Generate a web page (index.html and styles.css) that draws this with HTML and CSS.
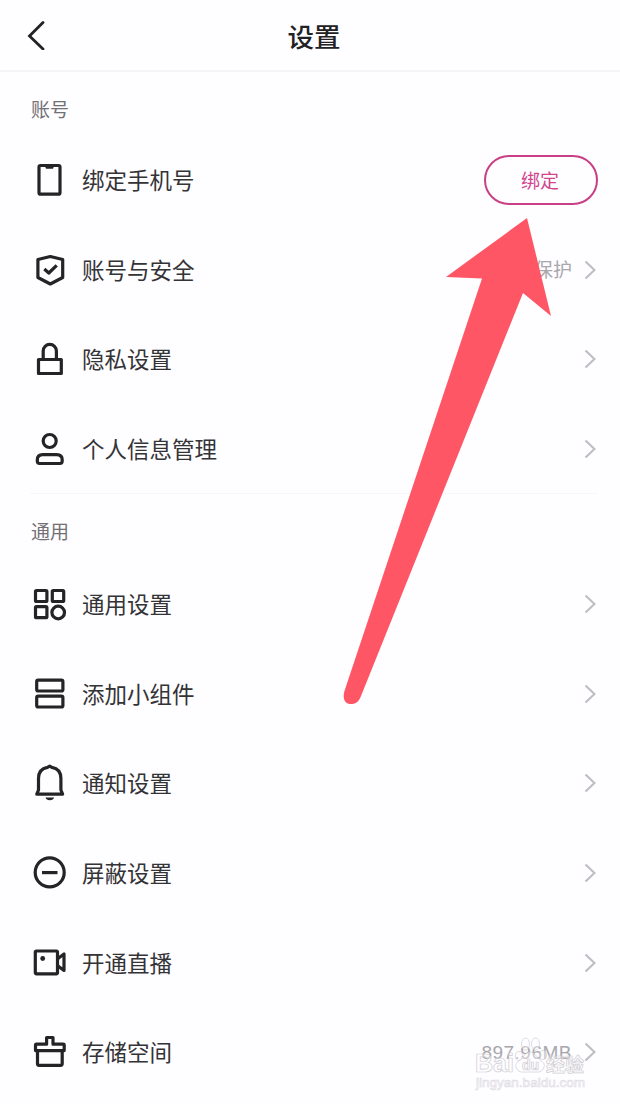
FILE: index.html
```html
<!DOCTYPE html>
<html lang="zh-CN">
<head>
<meta charset="utf-8">
<title>设置</title>
<link rel="stylesheet" href="styles.css">
</head>
<body>
<div class="screen">
  <header class="header">
    <svg class="back" viewBox="0 0 20 30"><path d="M17 2.500 3.500 16 17 29"/></svg>
    <h1 class="title">设置</h1>
  </header>
  <main class="content">
    <section class="group">
      <h2 class="group-title">账号</h2>
      <div class="row">
        <svg class="icon" viewBox="0 0 40 40"><rect x="9" y="5.500" width="21" height="28.700" rx="1.500"/><path class="solid" d="M14.500 5h10l-1.500 3.800h-7z"/></svg>
        <span class="label">绑定手机号</span>
        <button class="bind">绑定</button>
      </div>
      <div class="row">
        <svg class="icon" viewBox="0 0 40 40"><path d="M20.300 6.500 32.700 9.500V27.500L20.300 34 7.900 27.500V9.500Z"/><path d="M14.300 19 18.800 23 26.700 15.300"/></svg>
        <span class="label">账号与安全</span>
        <span class="value">保护</span>
        <svg class="chevron" viewBox="0 0 12 20"><path d="M1.500 1.500 10.500 10 1.500 18.500"/></svg>
      </div>
      <div class="row">
        <svg class="icon" viewBox="0 0 40 40"><rect x="8.500" y="20.500" width="22.800" height="14"/><path d="M13.200 20.500v-8.500a6.600 6.600 0 0 1 13.200 0v8.500"/></svg>
        <span class="label">隐私设置</span>
        <svg class="chevron" viewBox="0 0 12 20"><path d="M1.500 1.500 10.500 10 1.500 18.500"/></svg>
      </div>
      <div class="row">
        <svg class="icon" viewBox="0 0 40 40"><circle cx="19.700" cy="12" r="6.500"/><path d="M7.300 32v-1q0-5.300 5.500-5.300h13.900q5.500 0 5.500 5.300V32q0 2.500-2.300 2.500H9.600Q7.300 34.500 7.300 32Z"/></svg>
        <span class="label">个人信息管理</span>
        <svg class="chevron" viewBox="0 0 12 20"><path d="M1.500 1.500 10.500 10 1.500 18.500"/></svg>
      </div>
    </section>
    <section class="group">
      <h2 class="group-title">通用</h2>
      <div class="row">
        <svg class="icon" viewBox="0 0 40 40"><rect x="5.500" y="6.500" width="11.400" height="11" rx="1"/><rect x="22.300" y="6.500" width="11.400" height="11" rx="1"/><rect x="5.500" y="22.700" width="11.400" height="11" rx="1"/><circle cx="28.200" cy="28.500" r="6.300"/></svg>
        <span class="label">通用设置</span>
        <svg class="chevron" viewBox="0 0 12 20"><path d="M1.500 1.500 10.500 10 1.500 18.500"/></svg>
      </div>
      <div class="row">
        <svg class="icon" viewBox="0 0 40 40"><rect x="6.700" y="6.200" width="26.200" height="10.800" rx="1.500"/><rect x="6.700" y="22.200" width="26.200" height="10.800" rx="1.500"/></svg>
        <span class="label">添加小组件</span>
        <svg class="chevron" viewBox="0 0 12 20"><path d="M1.500 1.500 10.500 10 1.500 18.500"/></svg>
      </div>
      <div class="row">
        <svg class="icon" viewBox="0 0 40 40"><path d="M6.800 31.200 8.500 27V15.500Q8.500 6 17.500 4.400L19.700 3.200l2.200 1.200Q30.900 6 30.900 15.500V27l1.700 4.200Z"/><path class="solid" d="M15.500 34.500h8.600q-.8 2.700-4.300 2.700t-4.300-2.700Z"/></svg>
        <span class="label">通知设置</span>
        <svg class="chevron" viewBox="0 0 12 20"><path d="M1.500 1.500 10.500 10 1.500 18.500"/></svg>
      </div>
      <div class="row">
        <svg class="icon" viewBox="0 0 40 40"><circle cx="19.700" cy="19.400" r="14.500"/><path d="M12 19.600h15.500"/></svg>
        <span class="label">屏蔽设置</span>
        <svg class="chevron" viewBox="0 0 12 20"><path d="M1.500 1.500 10.500 10 1.500 18.500"/></svg>
      </div>
      <div class="row">
        <svg class="icon" viewBox="0 0 40 40"><rect x="5.300" y="8" width="22.200" height="22.800" rx="1.200"/><path d="M28 15.500 34 11V27.500L28 23"/><circle class="solid" cx="12.700" cy="15.500" r="2.400"/></svg>
        <span class="label">开通直播</span>
        <svg class="chevron" viewBox="0 0 12 20"><path d="M1.500 1.500 10.500 10 1.500 18.500"/></svg>
      </div>
      <div class="row">
        <svg class="icon" viewBox="0 0 40 40"><path d="M6.500 12.200H16.600V5.500h6.400v6.700H33.200q1 0 1 1V18.600H5.500V13.200q0-1 1-1Z"/><path d="M7.500 18.600V31.800q0 1.500 1.500 1.500H30.700q1.500 0 1.500-1.500V18.600"/></svg>
        <span class="label">存储空间</span>
        <span class="value size">897.96MB</span>
        <svg class="chevron" viewBox="0 0 12 20"><path d="M1.500 1.500 10.500 10 1.500 18.500"/></svg>
      </div>
    </section>
  </main>
  <svg class="pointer" viewBox="0 0 620 1104"><path d="M527 218 446 277 482 278.500 344.800 690C341 702 348 704.500 352 704 357 703.500 359 701 361 696L523 293 551 316Z"/></svg>
  <svg class="watermark" viewBox="0 0 120 60">
    <g class="mark">
      <text x="5" y="38" font-size="26" textLength="39" lengthAdjust="spacingAndGlyphs">Bai</text>
      <ellipse cx="49" cy="22" rx="3.500" ry="4.500"/><ellipse cx="55.500" cy="10" rx="4" ry="6"/><ellipse cx="65.500" cy="10" rx="4" ry="6"/><ellipse cx="73" cy="21" rx="3.500" ry="4.500"/>
      <path d="M60 18c5 0 6 5 10 8 5 3 5 6 3 9-2 4-6 3-13 3s-11 1-13-3c-2-3-2-6 3-9 4-3 5-8 10-8Z"/>
      <text x="52" y="36" font-size="14">du</text>
      <text x="76" y="38" font-size="19">经验</text>
    </g>
    <text class="url" x="6" y="53" font-size="13" textLength="109" lengthAdjust="spacingAndGlyphs">jingyan.baidu.com</text>
  </svg>
</div>
</body>
</html>
```
FILE: styles.css
```css
* {
  box-sizing: border-box;
}

body {
  margin: 0;
  background: #fefdff;
  font-family: "Noto Sans CJK SC", sans-serif;
  color: #343336;
}

.screen {
  position: relative;
  width: 620px;
  height: 1104px;
  overflow: hidden;
}

.header {
  display: grid;
  grid-template-columns: 1fr auto 1fr;
  align-items: center;
  height: 72px;
  padding: 0 26px 0 26px;
  border-bottom: 2px solid #f4f3f6;
}

.back {
  width: 20px;
  height: 30px;
  fill: none;
  stroke: #222124;
  stroke-width: 2.8;
  stroke-linecap: round;
}

.title {
  margin: 1px 0 0;
  padding-left: 8px;
  font-size: 26.5px;
  line-height: 36px;
  font-weight: 500;
  color: #222124;
}

.content {
  padding: 0 22px 0 30px;
}

.group-title {
  display: flex;
  align-items: center;
  height: 63px;
  margin: 0;
  padding: 10px 0 0 1px;
  font-size: 19px;
  font-weight: 400;
  line-height: 28px;
  color: #727075;
}

.group + .group {
  margin-top: -1px;
  border-top: 1px solid #f7f6f9;
}

.group + .group .group-title {
  height: 65.300px;
}

.row {
  display: flex;
  align-items: center;
  height: 89.700px;
}

.icon {
  flex: none;
  width: 40px;
  height: 40px;
  margin-right: 12px;
  fill: none;
  stroke: #242326;
  stroke-width: 3.2;
  stroke-linejoin: round;
}

.icon .solid {
  fill: #242326;
  stroke: none;
}

.label {
  flex: 1;
  padding-bottom: 2px;
  font-size: 22.500px;
  line-height: 32px;
}

.value {
  margin-right: 12px;
  padding-bottom: 1px;
  font-size: 19px;
  line-height: 28px;
  color: #a9a7ac;
}

.size {
  padding: 1px 0 0;
  font-family: "Liberation Sans", sans-serif;
  letter-spacing: 0.5px;
}

.chevron {
  width: 12px;
  height: 20px;
  margin-right: 2px;
  fill: none;
  stroke: #c0bec3;
  stroke-width: 2.2;
}

.bind {
  width: 114px;
  height: 50px;
  padding: 0 2px 0 0;
  border: 2px solid #c93f86;
  border-radius: 25px;
  background: transparent;
  font: 400 19px/28px "Noto Sans CJK SC", sans-serif;
  color: #d0458e;
}

.pointer {
  position: absolute;
  inset: 0;
  width: 620px;
  height: 1104px;
  fill: #ff5665;
  pointer-events: none;
}

.watermark {
  position: absolute;
  left: 470px;
  top: 1034px;
  width: 120px;
  height: 60px;
  font-family: "Liberation Sans", "Noto Sans CJK SC", sans-serif;
  font-weight: 700;
}

.mark {
  fill: #fefdff;
  fill-opacity: 0.4;
  stroke: #cfcdd1;
  stroke-width: 0.7;
}

.url {
  fill: #fefdff;
  stroke: #dddbdf;
  stroke-width: 0.6;
  font-weight: 400;
}
```
